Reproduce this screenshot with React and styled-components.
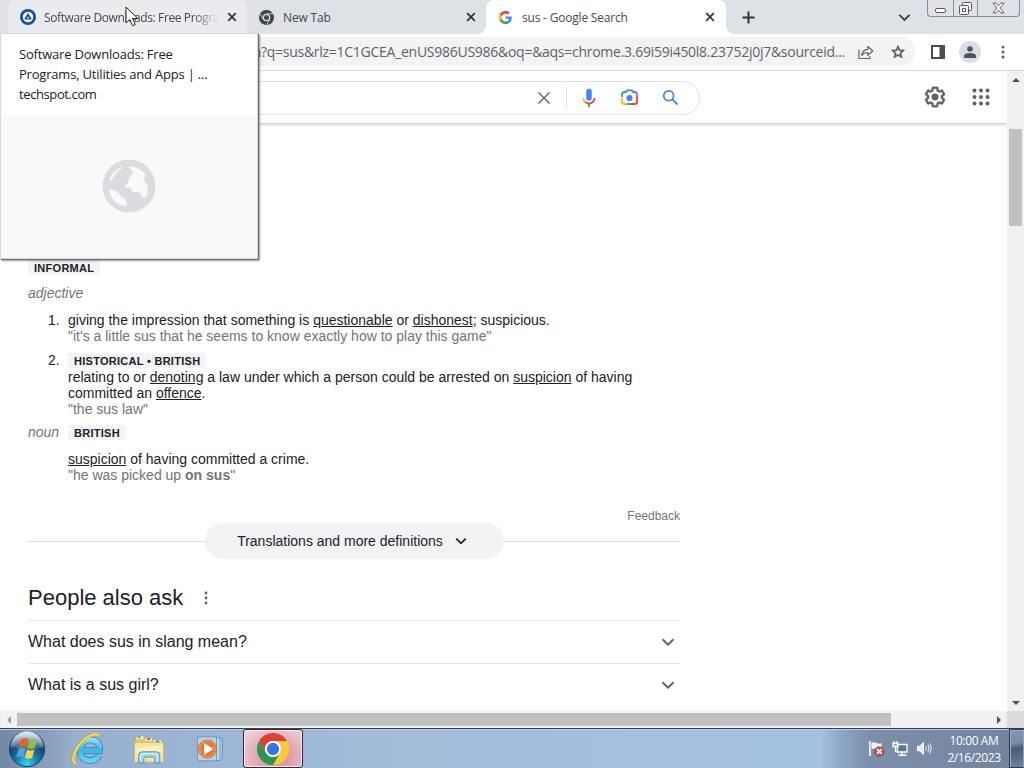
import React from "react";
import styled, { createGlobalStyle } from "styled-components";

const Global = createGlobalStyle`
  * { box-sizing: border-box; }
  html, body { margin: 0; padding: 0; background: #fff; overflow: hidden; }
`;
const ui = `"Open Sans", "Noto Sans", sans-serif`;
const arial = `"Liberation Sans", Arial, sans-serif`;

const Screen = styled.div`
  position: relative;
  width: 1024px;
  height: 768px;
  display: flex;
  flex-direction: column;
  overflow: hidden;
  font-family: ${arial};
  color: #202124;
  svg { display: block; flex: none; }
`;

/* Browser chrome */
const TabStrip = styled.div`
  height: 34px;
  flex: none;
  display: flex;
  padding-left: 8px;
  background: #dee1e6;
  font-family: ${ui};
`;
const Tab = styled.div`
  position: relative;
  width: ${(p) => p.$w}px;
  height: 34px;
  flex: none;
  display: flex;
  align-items: center;
  padding: 0 ${(p) => p.$right}px 0 ${(p) => p.$left || 12}px;
  gap: ${(p) => p.$gap || 8}px;
  font-size: 12px;
  color: #45494d;
  border-radius: 8px 8px 0 0;
  background: ${(p) => (p.$active ? "#fff" : p.$hover ? "#e9ebef" : "transparent")};
  ${(p) => p.$active && `
    &::before, &::after {
      content: ""; position: absolute; bottom: 0; width: 8px; height: 8px;
    }
    &::before { left: -8px; background: radial-gradient(circle at 0 0, transparent 7.5px, #fff 8px); }
    &::after { right: -8px; background: radial-gradient(circle at 100% 0, transparent 7.5px, #fff 8px); }
  `}
`;
const TabTitle = styled.span`
  flex: 1;
  overflow: hidden;
  white-space: nowrap;
  letter-spacing: ${(p) => p.$ls || 0}px;
  ${(p) => p.$fade && `mask-image: linear-gradient(90deg, #000 85%, transparent);`}
`;
const NewTabButton = styled.div`
  display: flex;
  align-items: center;
  margin-left: 16px;
`;
const StripSpacer = styled.div`flex: 1;`;
const TabSearch = styled.div`
  display: flex;
  align-items: center;
  margin-right: 16px;
`;
const WindowControls = styled.div`
  display: flex;
  height: 17px;
  width: 93px;
  margin-right: 4px;
  border: 1px solid #8b8f95;
  border-top: 0;
  border-radius: 0 0 4px 4px;
`;
const WindowButton = styled.div`
  width: ${(p) => p.$w}px;
  display: flex;
  align-items: center;
  justify-content: center;
  & + & { border-left: 1px solid #8b8f95; }
`;
const Toolbar = styled.div`
  height: 37px;
  flex: none;
  display: flex;
  align-items: center;
  padding-bottom: 1px;
  border-bottom: 1px solid #d5d7da;
  background: #fff;
`;
const Omnibox = styled.div`
  width: 815px;
  height: 29px;
  margin-left: 100px;
  display: flex;
  align-items: center;
  border-radius: 15px;
  background: #f1f3f4;
`;
const Url = styled.span`
  width: 587px;
  margin-left: 158px;
  display: flex;
  justify-content: flex-end;
  white-space: nowrap;
  font: 14px ${ui};
  letter-spacing: ${(p) => p.$ls}px;
  color: #5f6368;
`;
const OmniIcons = styled.div`
  display: flex;
  gap: 16px;
  margin-left: 13px;
`;
const ToolbarIcons = styled.div`
  display: flex;
  align-items: center;
  margin-left: 16px;
`;
const Avatar = styled.div`
  width: 22px;
  height: 22px;
  margin: 0 20px 0 14px;
  border-radius: 50%;
  background: #dadde5;
  display: flex;
  align-items: center;
  justify-content: center;
`;

/* Page */
const Viewport = styled.div`
  height: 640px;
  flex: none;
  display: flex;
`;
const Page = styled.div`
  width: 1007px;
  overflow: hidden;
  background: #fff;
`;
const PageHeader = styled.div`
  height: 53px;
  display: flex;
  align-items: center;
  padding: 1px 17px 0 0;
  border-bottom: 1px solid #d4d6d8;
  box-shadow: 0 1px 3px rgba(32, 33, 36, 0.2);
`;
const SearchBox = styled.div`
  width: 600px;
  height: 34px;
  margin-left: 100px;
  display: flex;
  align-items: center;
  justify-content: flex-end;
  border: 1px solid #dfe1e5;
  border-radius: 17px;
  padding-right: 20px;
`;
const SearchDivider = styled.div`
  width: 1px;
  height: 21px;
  margin: 0 11px 0 15px;
  background: #dfe1e5;
`;
const SearchTools = styled.div`
  display: flex;
  align-items: center;
  gap: ${(p) => p.$gap}px;
`;
const HeaderTools = styled.div`
  margin-left: auto;
  padding-bottom: 2px;
  display: flex;
  align-items: center;
  gap: 25px;
`;
const Results = styled.div`
  width: 652px;
  margin-left: 28px;
  padding-top: 135px;
  font-size: 14px;
  line-height: 16px;
`;
const Badge = styled.span`
  display: inline-block;
  height: 15px;
  padding: 0 6px;
  border-radius: 3px;
  background: #f3f4f5;
  font: bold 11px/16px ${arial};
  letter-spacing: ${(p) => p.$ls ?? 0.28}px;
`;
const BadgeLine = styled.div`
  height: ${(p) => p.$h || 16}px;
  display: flex;
  align-items: flex-start;
  padding-top: 1px;
`;
const PartOfSpeech = styled.div`
  width: ${(p) => (p.$w ? p.$w + "px" : "auto")};
  font-size: 14px;
  line-height: 16px;
  font-style: italic;
  color: #70757a;
`;
const AdjectiveLine = styled.div`margin-top: 10px;`;
const Senses = styled.div`
  display: flex;
  flex-direction: column;
  gap: 8px;
  margin-top: 11px;
`;
const Sense = styled.div`
  display: flex;
`;
const SenseNo = styled.div`
  width: 40px;
  padding-left: 20px;
`;
const Definition = styled.div`
  white-space: nowrap;
  u { text-underline-offset: 1px; }
`;
const Example = styled.div`
  color: #70757a;
`;
const NounLine = styled.div`
  display: flex;
  align-items: center;
  height: 18px;
  margin-top: 6px;
`;
const NounSense = styled.div`
  margin: 10px 0 0 40px;
`;
const Feedback = styled.div`
  margin-top: 25px;
  text-align: right;
  font-size: 12px;
  color: #70757a;
`;
const MoreRow = styled.div`
  display: flex;
  align-items: center;
  margin-top: -1px;
  &::before, &::after { content: ""; flex: 1; height: 1px; background: #dadce0; }
`;
const MorePill = styled.div`
  width: 299px;
  height: 36px;
  display: flex;
  align-items: center;
  justify-content: center;
  gap: 12px;
  border-radius: 19px;
  padding-right: 4px;
  background: #f1f3f4;
`;
const AskHeader = styled.div`
  height: 61px;
  display: flex;
  align-items: center;
  gap: 15px;
  padding-top: 16px;
  font-size: 22px;
  line-height: 28px;
`;
const Question = styled.div`
  height: 43px;
  display: flex;
  align-items: center;
  justify-content: space-between;
  padding-right: 5px;
  border-top: 1px solid #e4e6e9;
  font-size: 16px;
`;

/* Scroll bars */
const VScroll = styled.div`
  width: 17px;
  display: flex;
  flex-direction: column;
  align-items: center;
  background: #f1f1f1;
`;
const HScroll = styled.div`
  height: 17px;
  flex: none;
  display: flex;
  align-items: center;
  background: #f1f1f1;
`;
const ScrollArrow = styled.div`
  width: 17px;
  height: 17px;
  flex: none;
  display: flex;
  align-items: center;
  justify-content: center;
`;
const VTrack = styled.div`
  flex: 1;
  width: 13px;
  padding-top: 41px;
`;
const VThumb = styled.div`height: 97px; background: #c1c1c1;`;
const HTrack = styled.div`flex: 1;`;
const HThumb = styled.div`width: 874px; height: 13px; background: #c1c1c1;`;
const Corner = styled.div`width: 17px; height: 17px; background: #dcdcdc;`;

/* Taskbar */
const Taskbar = styled.div`
  height: 40px;
  flex: none;
  display: flex;
  align-items: center;
  border-top: 1px solid #343e55;
  box-shadow: inset 0 1px 0 #b9c9dd;
  background: linear-gradient(90deg, #7288a4 0, #8198b7 35px, #98afcd 75px, #9bb4d4 180px, #a3bddb 400px, #a5c1e1 820px, #8ca7c6 842px, #7b8fab 870px, #74849f 1010px);
`;
const Launchers = styled.div`
  display: flex;
  align-items: center;
  padding-left: 8px;
`;
const Launcher = styled.div`
  width: ${(p) => p.$w}px;
  display: flex;
  justify-content: center;
`;
const RunningApp = styled.div`
  width: 60px;
  height: 39px;
  margin-left: -9px;
  display: flex;
  align-items: center;
  justify-content: center;
  border: 1px solid #302b3c;
  border-radius: 3px;
  box-shadow: inset 0 0 0 1px #f8e9ee;
  background: radial-gradient(ellipse at 55% 75%, #dc8791 0, #e5adb7 50%, #f2dbe2 100%);
`;
const Tray = styled.div`
  margin-left: auto;
  display: flex;
  align-items: center;
  gap: 7px;
`;
const Clock = styled.div`
  width: 64px;
  margin: 0 -4px 0 2px;
  text-align: center;
  white-space: nowrap;
  font: 12px/17px ${ui};
  letter-spacing: -0.4px;
  color: #fff;
`;
const ShowDesktop = styled.div`
  width: 15px;
  height: 39px;
  border: 1px solid #2d3a50;
  border-right-color: #8ba0bb;
  box-shadow: inset 1px 1px 0 #a0b2c8;
  background: linear-gradient(170deg, #8195af 0, #7a8da8 35%, #4b5d76 50%, #6c829e 100%);
`;

/* Overlays */
const HoverCard = styled.div`
  position: absolute;
  left: 0;
  top: 33px;
  width: 258px;
  height: 226px;
  display: flex;
  flex-direction: column;
  background: #fff;
  border: 1px solid #d5d7da;
  box-shadow: 1px 1px 1px #6f6f6f, 2px 2px 2px rgba(0, 0, 0, 0.35);
  font-family: ${ui};
`;
const CardText = styled.div`
  height: 82px;
  padding: 10px 18px;
  font-size: 13px;
  line-height: 20px;
  white-space: nowrap;
`;
const CardLine = styled.div`
  font-weight: ${(p) => (p.$strong ? 500 : 400)};
  letter-spacing: ${(p) => p.$ls || 0}px;
`;
const CardPreview = styled.div`
  flex: 1;
  display: flex;
  align-items: center;
  justify-content: center;
  background: #f8f9fa;
`;
const Pointer = styled.svg`
  position: absolute;
  left: 125px;
  top: 6px;
`;

const Close = () => (
  <svg width="10" height="10" viewBox="0 0 10 10" stroke="#303338" strokeWidth="1.7"><path d="M1.2 1.2 8.8 8.8M8.8 1.2 1.2 8.8" /></svg>
);
const Chevron = ({ w = 14, c = "#5f6368", s = 2 }) => (
  <svg width={w} height={w} viewBox="0 0 14 14" fill="none" stroke={c} strokeWidth={s}><path d="M1.5 4.2 7 9.7l5.5-5.5" /></svg>
);
const Dots = ({ w = 4, r = 1.5 }) => (
  <svg width={w} height="16" viewBox={`${-w / 2} 0 ${w} 16`} fill="#5f6368"><circle cy="3" r={r} /><circle cy="8" r={r} /><circle cy="13" r={r} /></svg>
);
const Triangle = ({ r = 0, c = "#505050" }) => (
  <svg width="8" height="8" viewBox="0 0 8 8" fill={c}><path transform={`rotate(${r} 4 4)`} d="M0 6 4 2l4 4z" /></svg>
);
const GoogleG = () => (
  <svg width="13" height="13" viewBox="0 0 48 48">
    <path fill="#EA4335" d="M24 9.5c3.54 0 6.71 1.22 9.21 3.6l6.85-6.85C35.9 2.38 30.47 0 24 0 14.62 0 6.51 5.38 2.56 13.22l7.98 6.19C12.43 13.72 17.74 9.5 24 9.5z" />
    <path fill="#4285F4" d="M46.98 24.55c0-1.57-.15-3.09-.38-4.55H24v9.02h12.94c-.58 2.96-2.26 5.48-4.78 7.18l7.73 6c4.51-4.18 7.09-10.36 7.09-17.65z" />
    <path fill="#FBBC05" d="M10.53 28.59a14.5 14.5 0 0 1 0-9.18l-7.98-6.19a24 24 0 0 0 0 21.56l7.98-6.19z" />
    <path fill="#34A853" d="M24 48c6.48 0 11.93-2.13 15.89-5.81l-7.73-6c-2.15 1.45-4.92 2.3-8.16 2.3-6.26 0-11.57-4.22-13.47-9.91l-7.98 6.19C6.51 42.62 14.62 48 24 48z" />
  </svg>
);
const TechSpot = () => (
  <svg width="16" height="16" viewBox="0 0 16 16"><circle cx="8" cy="8" r="8" fill="#1651a8" /><circle cx="8" cy="8" r="5.2" fill="#fff" /><path d="M8 4.6 11.2 10H4.8z" fill="#1651a8" stroke="#1651a8" strokeLinejoin="round" /><path d="M8 7.6 9 9.2H7z" fill="#fff" /></svg>
);
const ChromeMark = ({ size, mono }) => {
  const [r, g, y, b] = mono ? ["#43474c", "#43474c", "#43474c", "#43474c"] : ["#dd4034", "#29984c", "#fccb32", "#2f78e5"];
  return (
    <svg width={size} height={size} viewBox="0 0 48 48">
      <path fill={r} d="M3.2 12A24 24 0 0 1 44.8 12H24A12 12 0 0 0 13.6 30z" />
      <path fill={y} d="M44.8 12A24 24 0 0 1 24 48L34.4 30A12 12 0 0 0 24 12z" />
      <path fill={g} d="M24 48A24 24 0 0 1 3.2 12L13.6 30A12 12 0 0 0 34.4 30z" />
      {mono && <g stroke="#dee1e6" strokeWidth="2.4"><path d="M24 12H45M13.6 30 3.2 12M34.4 30 24 48" /></g>}
      <circle cx="24" cy="24" r={mono ? 11 : 12} fill={mono ? "#dee1e6" : "#fff"} /><circle cx="24" cy="24" r={mono ? 8 : 9.2} fill={b} />
    </svg>
  );
};
const Share = () => (
  <svg width="16" height="16" viewBox="0 0 16 16" fill="none" stroke="#5f6368" strokeWidth="1.2" strokeLinejoin="round">
    <path d="M1 5.5v9h11v-2.5" /><path d="M3.7 11.3C4.2 7.6 6.2 5.5 9.8 5.3V2.5L14.8 7l-5 4.3V8.5C7 8.5 5.2 9.3 3.7 11.3z" />
  </svg>
);
const Star = () => (
  <svg width="16" height="16" viewBox="0 0 24 24" fill="#50545a"><path d="m22 9.24-7.19-.62L12 2 9.19 8.63 2 9.24l5.46 4.73L5.82 21 12 17.27 18.18 21l-1.63-7.03zM12 15.4l-3.76 2.27 1-4.28-3.32-2.88 4.38-.38L12 6.1l1.71 4.04 4.38.38-3.32 2.88 1 4.28z" stroke="#50545a" strokeWidth=".8" /></svg>
);
const SidePanel = () => (
  <svg width="14" height="14" viewBox="0 0 14 14"><path fill="#4b4f54" fillRule="evenodd" d="M0 0h14v14H0zM2 2v10h6.5V2z" /></svg>
);
const Mic = () => (
  <svg width="22" height="22" viewBox="0 0 24 24">
    <path fill="#4285f4" d="M12 15a3 3 0 0 0 3-3V5a3 3 0 0 0-6 0v7a3 3 0 0 0 3 3z" />
    <path fill="#34a853" d="M11 18.1h2V22h-2z" />
    <path fill="#fbbc04" d="M7 12H5c0 1.9.8 3.7 2 5l1.5-1.4A5 5 0 0 1 7 12z" />
    <path fill="#ea4335" d="M12 17a5 5 0 0 1-3.5-1.4L7 17a7 7 0 0 0 5 2c3.9 0 7-3.1 7-7h-2c0 2.8-2.2 5-5 5z" />
  </svg>
);
const Lens = () => (
  <svg width="19" height="19" viewBox="0 0 19 19" fill="none" strokeWidth="1.8">
    <path stroke="#34a853" d="M2 9V6.5A2.5 2.5 0 0 1 4 4" />
    <path stroke="#4285f4" d="M4 4h2l1-1.6h5L13 4h1.5A2.5 2.5 0 0 1 17 6.5" />
    <path stroke="#ea4335" d="M17 6.5V14a2 2 0 0 1-2 2h-4" />
    <path stroke="#34a853" d="M11 16H6" />
    <path stroke="#fbbc04" d="M2 10v3.5A2.5 2.5 0 0 0 4.5 16H7" />
    <circle cx="9.5" cy="10" r="3.1" fill="#4285f4" />
  </svg>
);
const Search = () => (
  <svg width="17" height="17" viewBox="0 0 17 17" fill="none" stroke="#4a80e8" strokeWidth="1.8"><circle cx="6.7" cy="6.7" r="4.9" /><path d="M10.4 10.4 15.5 15.5" /></svg>
);
const Gear = () => (
  <svg width="24" height="24" viewBox="0 0 24 24" fill="#5f6368">
    <path stroke="#5f6368" strokeWidth=".4" d="M13.85 22.25h-3.7c-.74 0-1.36-.54-1.45-1.27l-.27-1.89c-.27-.14-.53-.29-.79-.46l-1.8.72c-.7.26-1.47-.03-1.81-.65L2.2 15.53c-.35-.66-.2-1.44.36-1.88l1.53-1.19c-.01-.15-.02-.3-.02-.46 0-.15.01-.31.02-.46l-1.52-1.19c-.59-.45-.74-1.26-.37-1.88l1.85-3.19c.34-.62 1.11-.9 1.79-.63l1.81.73c.26-.17.52-.32.78-.46l.27-1.91c.09-.7.71-1.25 1.44-1.25h3.7c.74 0 1.36.54 1.45 1.27l.27 1.89c.27.14.53.29.79.46l1.8-.72c.71-.26 1.48.03 1.82.65l1.84 3.18c.36.66.2 1.44-.36 1.88l-1.52 1.19c.01.15.02.3.02.46s-.01.31-.02.46l1.52 1.19c.56.45.72 1.23.37 1.86l-1.86 3.22c-.34.62-1.11.9-1.8.63l-1.8-.72c-.26.17-.52.32-.78.46l-.27 1.91c-.1.68-.72 1.22-1.46 1.22zm-3.23-2h2.76l.37-2.55.53-.22c.44-.18.88-.44 1.34-.78l.45-.34 2.38.96 1.38-2.4-2.03-1.58.07-.56c.03-.26.06-.51.06-.78s-.03-.53-.06-.78l-.07-.56 2.03-1.58-1.39-2.4-2.39.96-.45-.35c-.42-.32-.87-.58-1.33-.77l-.52-.22-.37-2.55h-2.76l-.37 2.55-.53.21c-.44.19-.88.44-1.34.79l-.45.33-2.38-.95-1.39 2.39 2.03 1.58-.07.56a7 7 0 0 0-.06.79c0 .26.02.53.06.78l.07.56-2.03 1.58 1.38 2.4 2.39-.96.45.35c.43.33.86.58 1.33.77l.53.22z" /><circle cx="12" cy="12" r="3.5" />
  </svg>
);
const Apps = () => (
  <svg width="18" height="18" viewBox="0 0 18 18" fill="#5f6368">
    {[2.5, 9, 15.5].map((y) => [2.5, 9, 15.5].map((x) => <circle key={x + "-" + y} cx={x} cy={y} r="2" />))}
  </svg>
);
const Globe = () => (
  <svg width="54" height="54" viewBox="0 0 54 54">
    <circle cx="27" cy="26" r="26.5" fill="#dadce0" />
    <path fill="#f8f9fa" d="M27 7C34 6 40 9 43 14L42 20 46 27 45 36 40 38 37 31 31 33 29 28 22 27 26 23 27 18 31 13Z" />
    <path fill="#f8f9fa" d="M8 19C10 12 16 8 22 7L16 11 13 15 8 22Z" />
    <path fill="#f8f9fa" d="M7 29 14 31 20 37 24 40 25 46C15 46 8 39 7 29Z" />
  </svg>
);
const StartOrb = () => (
  <svg width="38" height="38" viewBox="0 0 38 38">
    <defs>
      <radialGradient id="orb" cx=".5" cy=".9" r=".9"><stop offset="0" stopColor="#35d5f4" /><stop offset=".35" stopColor="#1879ad" /><stop offset=".65" stopColor="#16466f" /><stop offset="1" stopColor="#a4bacf" /></radialGradient>
      <linearGradient id="shine" x2="0" y2="1"><stop stopColor="#fff" stopOpacity=".75" /><stop offset="1" stopColor="#fff" stopOpacity=".1" /></linearGradient>
    </defs>
    <circle cx="19" cy="19" r="17.6" fill="url(#orb)" stroke="#1d3c5f" />
    <path d="M3 17A16 16 0 0 1 35 17Q19 22 3 17z" fill="url(#shine)" />
    <path d="M12.8 9.5Q16.5 7 20 9L18 17Q14.5 15.5 10.8 17.8z" fill="#eb6026" />
    <path d="M21.2 9.8Q25 12 29 9.8L26.8 18.2Q23 20 19.3 17.8z" fill="#91be3d" />
    <path d="M10.4 19.2Q14 17 17.6 18.8L15.5 27Q12 25.2 8.2 27.5z" fill="#4aa7e4" />
    <path d="M18.9 19.4Q22.6 21.3 26.4 19.5L24.2 27.8Q20.5 30 16.8 27.5z" fill="#fbd33c" />
  </svg>
);
const Explorer = () => (
  <svg width="34" height="34" viewBox="0 0 34 34" fill="none">
    <defs><linearGradient id="ie" x1="0" y1="5" x2="0" y2="31" gradientUnits="userSpaceOnUse"><stop stopColor="#9ae8f8" /><stop offset=".5" stopColor="#3bb5e4" /><stop offset="1" stopColor="#69daf6" /></linearGradient></defs>
    <path d="M10.5 18.5H28.5C29.5 11.5 25.5 7.8 19.3 7.8S9 12.5 9 18.5 13 28.5 19 28.5C23.3 28.5 26.3 26.5 28 23.5" stroke="#2382b9" strokeWidth="6.6" />
    <path d="M10.5 18.5H28.5C29.5 11.5 25.5 7.8 19.3 7.8S9 12.5 9 18.5 13 28.5 19 28.5C23.3 28.5 26.3 26.5 28 23.5" stroke="url(#ie)" strokeWidth="5.2" />
    <path d="M28.5 4.5C25-.5 13 4.5 7 14.5 1.5 23.5 0 31 4.8 32.2" stroke="#c59b24" strokeWidth="3.2" />
    <path d="M28.5 3.8C24.5-.2 13 4.7 7 14.5 1.8 23 .8 30 4.8 31.8" stroke="#f6d64d" strokeWidth="2.4" />
  </svg>
);
const Folder = () => (
  <svg width="32" height="30" viewBox="0 0 34 32">
    <path d="M2 3h7l2 2h9l2 2h10v22H2z" fill="#e8c965" stroke="#b49545" strokeWidth=".8" />
    <path d="M4 4h7M13 6h7M22 8h8" stroke="#fffce7" strokeWidth="2.5" /><path d="M5 3.5h3" stroke="#47a642" strokeWidth="2" /><path d="M15 5.5h3" stroke="#ce4e32" strokeWidth="2" /><path d="M24 8h4" stroke="#3a83c5" strokeWidth="2" />
    <path d="M1.5 9H32.5V30H1.5z" fill="#f6e59b" stroke="#cbb264" strokeWidth=".8" /><path d="M2 15 32 12v7L2 21z" fill="#faefba" />
    <path d="M6 31V22.5Q6 19 10 19H25Q28.5 19 28.5 22.5V31H23V26Q23 24.5 21 24.5H14Q11.5 24.5 11.5 26V31z" fill="#9fd7ef" stroke="#4290bb" strokeWidth="1" />
    <path d="M8 29V23Q8 21 10.5 21H24.5Q26.5 21 26.5 23V29" stroke="#e1f7ff" fill="none" />
  </svg>
);
const MediaPlayer = () => (
  <svg width="28" height="26" viewBox="0 0 28 26">
    <path d="M9 2.5h17.5v19L24 24H9z" fill="#a3cbe3" stroke="#5a93ba" strokeWidth=".8" /><path d="M5 1.5h19v23H5z" fill="#b7d9ec" stroke="#5a97be" strokeWidth=".8" /><path d="M1.5.8h19v24h-19z" fill="#b9cfe2" stroke="#5a93b6" strokeWidth=".8" />
    <circle cx="11.5" cy="13" r="9" fill="#eb762c" stroke="#c56229" strokeWidth=".7" /><circle cx="11.5" cy="13" r="7.8" fill="none" stroke="#f4a261" /><path d="m8 7 9.5 6L8 19z" fill="#fff" />
  </svg>
);
const FlagIcon = () => (
  <svg width="17" height="17" viewBox="0 0 17 17"><path d="M2 1v15" stroke="#f7f9fa" strokeWidth="1.8" /><path d="M3 2.5q3-1.5 5.5 0t5.5 0v7q-3 1-5.5 0T3 9.5z" fill="#eef2f5" stroke="#4f5b6d" strokeWidth=".5" /><circle cx="11.3" cy="11.5" r="4.8" fill="#d04a50" stroke="#8a2831" strokeWidth=".5" /><path d="m9 9.2 4.6 4.6m0-4.6L9 13.8" stroke="#fff" strokeWidth="1.8" /></svg>
);
const NetworkIcon = () => (
  <svg width="17" height="17" viewBox="0 0 17 17" fill="none"><path d="M5.5 4.5H15V12H5.5z" fill="#61758f" stroke="#fff" strokeWidth="1.3" /><path d="M10 12v3M6.5 15.3h8" stroke="#fff" strokeWidth="1.5" /><path d="M2 1v3M5 1v3M1 3.5h5v3H1zM3.5 6.5v5H6" stroke="#fff" strokeWidth="1.3" /></svg>
);
const SoundIcon = () => (
  <svg width="17" height="17" viewBox="0 0 17 17" fill="none"><path d="M1.5 6.2h2.3l3.7-3.8v12.2l-3.7-3.8H1.5z" fill="#e6eaf0" stroke="#fff" /><path d="M9.8 6.3q1.4 2.2 0 4.4M11.9 4.8q2.3 3.7 0 7.4M13.8 3.4q3 5 0 10.2" stroke="#f1f5fa" strokeWidth="1" /></svg>
);

export default function App() {
  return (
    <Screen>
      <Global />
      <TabStrip>
        <Tab $w={239} $right={10} $hover>
          <TechSpot /><TabTitle $fade $ls={-0.38}>Software Downloads: Free Progra</TabTitle><Close />
        </Tab>
        <Tab $w={239} $right={10} $gap={9}>
          <ChromeMark size={15} mono /><TabTitle $ls={-0.15}>New Tab</TabTitle><Close />
        </Tab>
        <Tab $w={240} $right={11} $left={13} $gap={10} $active>
          <GoogleG /><TabTitle $ls={-0.2}>sus - Google Search</TabTitle><Close />
        </Tab>
        <NewTabButton><svg width="13" height="13" viewBox="0 0 13 13" stroke="#303338" strokeWidth="2"><path d="M6.5 .5v12M.5 6.5h12" /></svg></NewTabButton>
        <StripSpacer />
        <TabSearch><Chevron w={13} c="#3c4043" /></TabSearch>
        <WindowControls>
          <WindowButton $w={25}><svg width="11" height="16"><rect x=".5" y="8.5" width="10" height="4" rx="1.5" fill="#fff" stroke="#555960" /></svg></WindowButton>
          <WindowButton $w={25}><svg width="13" height="14" viewBox="0 0 13 14" fill="none" stroke="#555960"><rect x="3.5" y="1.5" width="9" height="8" rx="1" fill="#f5f6f8" /><rect x=".5" y="4.5" width="9" height="9" rx="1" fill="#f5f6f8" /><path d="M3.5 7.5h3v3h-3z" /></svg></WindowButton>
          <WindowButton $w={42}><svg width="13" height="12" viewBox="0 0 13 12"><path d="M1 1h3l2.5 2.7L9 1h3L8.3 6 12 11H9L6.5 8.2 4 11H1L4.7 6z" fill="#f7f8fa" stroke="#555960" strokeWidth=".9" /></svg></WindowButton>
        </WindowControls>
      </TabStrip>
      <Toolbar>
        <Omnibox>
          <Url $ls={-0.27}>h?q=sus&amp;rlz=1C1GCEA_enUS986US986&amp;oq=&amp;aqs=chrome.3.69i59i450l8.23752j0j7&amp;sourceid...</Url>
          <OmniIcons><Share /><Star /></OmniIcons>
        </Omnibox>
        <ToolbarIcons>
          <SidePanel />
          <Avatar><svg width="12" height="12" viewBox="0 0 12 12" fill="#4c5565"><circle cx="6" cy="3" r="2.8" /><path d="M0 12V9.8C0 7.8 4 7 6 7s6 .8 6 2.8V12z" /></svg></Avatar>
          <Dots />
        </ToolbarIcons>
      </Toolbar>
      <Viewport>
        <Page>
          <PageHeader>
            <SearchBox>
              <svg width="14" height="14" viewBox="0 0 14 14" stroke="#70757a" strokeWidth="1.7"><path d="m1.5 1.5 11 11m0-11-11 11" /></svg>
              <SearchDivider />
              <SearchTools $gap={23}>
                <SearchTools $gap={20}><Mic /><Lens /></SearchTools>
                <Search />
              </SearchTools>
            </SearchBox>
            <HeaderTools><Gear /><Apps /></HeaderTools>
          </PageHeader>
          <Results>
            <BadgeLine><Badge>INFORMAL</Badge></BadgeLine>
            <AdjectiveLine><PartOfSpeech>adjective</PartOfSpeech></AdjectiveLine>
            <Senses>
              <Sense>
                <SenseNo>1.</SenseNo>
                <div>
                  <Definition>giving the impression that something is <u>questionable</u> or <u>dishonest</u>; suspicious.</Definition>
                  <Example>"it's a little sus that he seems to know exactly how to play this game"</Example>
                </div>
              </Sense>
              <Sense>
                <SenseNo>2.</SenseNo>
                <div>
                  <BadgeLine $h={17}><Badge>HISTORICAL • BRITISH</Badge></BadgeLine>
                  <Definition>relating to or <u>denoting</u> a law under which a person could be arrested on <u>suspicion</u> of having<br />committed an <u>offence</u>.</Definition>
                  <Example>"the sus law"</Example>
                </div>
              </Sense>
            </Senses>
            <NounLine><PartOfSpeech $w={40}>noun</PartOfSpeech><Badge>BRITISH</Badge></NounLine>
            <NounSense>
              <Definition><u>suspicion</u> of having committed a crime.</Definition>
              <Example>"he was picked up <b>on sus</b>"</Example>
            </NounSense>
            <Feedback>Feedback</Feedback>
            <MoreRow><MorePill>Translations and more definitions<Chevron w={12} c="#202124" /></MorePill></MoreRow>
            <AskHeader><span>People also ask</span><Dots w={16} r={1.4} /></AskHeader>
            <Question><span>What does sus in slang mean?</span><Chevron /></Question>
            <Question><span>What is a sus girl?</span><Chevron /></Question>
          </Results>
        </Page>
        <VScroll>
          <ScrollArrow><Triangle /></ScrollArrow>
          <VTrack><VThumb /></VTrack>
          <ScrollArrow><Triangle r={180} /></ScrollArrow>
        </VScroll>
      </Viewport>
      <HScroll>
        <ScrollArrow><Triangle r={-90} c="#a3a3a3" /></ScrollArrow>
        <HTrack><HThumb /></HTrack>
        <ScrollArrow><Triangle r={90} /></ScrollArrow>
        <Corner />
      </HScroll>
      <Taskbar>
        <Launchers>
          <Launcher $w={38}><StartOrb /></Launcher>
          <Launcher $w={84}><Explorer /></Launcher>
          <Launcher $w={38}><Folder /></Launcher>
          <Launcher $w={84}><MediaPlayer /></Launcher>
        </Launchers>
        <RunningApp><ChromeMark size={32} /></RunningApp>
        <Tray>
          <FlagIcon /><NetworkIcon /><SoundIcon />
          <Clock>10:00 AM<br />2/16/2023</Clock>
          <ShowDesktop />
        </Tray>
      </Taskbar>
      <HoverCard>
        <CardText>
          <CardLine $strong $ls={-0.2}>Software Downloads: Free</CardLine>
          <CardLine $strong $ls={-0.2}>Programs, Utilities and Apps | ...</CardLine>
          <CardLine $ls={-0.4}>techspot.com</CardLine>
        </CardText>
        <CardPreview><Globe /></CardPreview>
      </HoverCard>
      <Pointer width="14" height="22" viewBox="0 0 14 22"><path d="M1 1v16l3.8-3.5 2.8 6.3 2.7-1.2-2.7-6.1h5.2z" fill="#fff" stroke="#222" strokeWidth="1" /></Pointer>
    </Screen>
  );
}
